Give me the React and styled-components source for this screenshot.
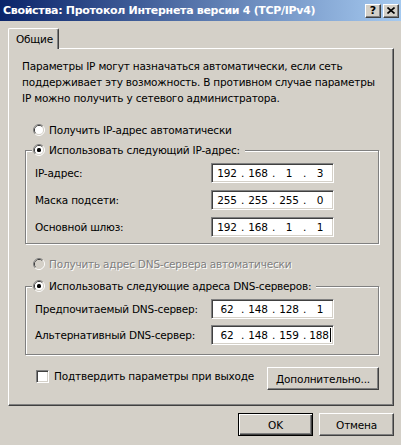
import React from "react";
import styled, { createGlobalStyle } from "styled-components";

const Global = createGlobalStyle`
  html, body { margin: 0; padding: 0; background: #d4d0c8; }
  * { box-sizing: border-box; }
`;

const Win = styled.div`
  width: 401px;
  height: 445px;
  background: #d4d0c8;
  display: flex;
  flex-direction: column;
  font-family: Tahoma, "DejaVu Sans", sans-serif;
  font-size: 10.5px;
  letter-spacing: -0.2px;
  color: #000;
  overflow: hidden;
`;

const TitleBar = styled.div`
  height: 21px;
  flex: none;
  display: flex;
  align-items: center;
  justify-content: space-between;
  padding: 0 2px 0 3px;
  background: linear-gradient(to right, #0a246a, #a6caf0);
`;

const Title = styled.span`
  color: #fff;
  font-weight: bold;
  font-size: 11px;
  letter-spacing: -0.3px;
  white-space: nowrap;
`;

const CaptionButtons = styled.div`
  display: flex;
  gap: 2px;
`;

const CaptionButton = styled.div`
  width: 16px;
  height: 14px;
  background: #d4d0c8;
  border: 1px solid;
  border-color: #fff #404040 #404040 #fff;
  box-shadow: inset -1px -1px #808080;
  display: flex;
  align-items: center;
  justify-content: center;
  font-weight: bold;
  font-size: 11px;
  letter-spacing: 0;
  line-height: 1;
`;

const Body = styled.div`
  flex: 1;
  display: flex;
  flex-direction: column;
  padding: 7px 7px 0 8px;
`;

const TabStrip = styled.div`
  display: flex;
  height: 20px;
`;

const Tab = styled.div`
  position: relative;
  z-index: 1;
  width: 51px;
  height: 21px;
  margin-bottom: -1px;
  background: #d4d0c8;
  border-top: 1px solid #fff;
  border-left: 1px solid #fff;
  border-right: 1px solid #404040;
  border-radius: 2px 2px 0 0;
  box-shadow: inset -1px 0 #808080;
  padding: 2px 0 0 7px;
  line-height: 16px;
`;

const TabPanel = styled.div`
  display: flex;
  flex-direction: column;
  border: 1px solid;
  border-color: #fff #404040 #404040 #fff;
  box-shadow: inset -1px -1px #808080;
  padding: 0 14px 15px 13px;
`;

const Description = styled.p`
  margin: 9px 0 0;
  line-height: 16px;
  white-space: nowrap;
`;

const OptionRow = styled.label`
  display: flex;
  align-items: center;
  gap: 4px;
  height: 16px;
  margin: ${(p) => p.$mt || 0}px 0 0 11px;
  color: ${(p) => (p.$disabled ? "#808080" : "#000")};
  text-shadow: ${(p) => (p.$disabled ? "1px 1px 0 #fff" : "none")};
  white-space: nowrap;
`;

const Group = styled.fieldset`
  margin: ${(p) => p.$mt}px 0 0 3px;
  padding: ${(p) => p.$pt}px 44px ${(p) => p.$pb}px 9px;
  border: 1px solid #808080;
  box-shadow: inset 1px 1px 0 #fff, 1px 1px 0 #fff;
  display: grid;
  grid-template-columns: 1fr 123px;
  row-gap: ${(p) => p.$gap}px;
  align-items: center;
  min-width: 0;
`;

const Legend = styled.legend`
  margin-left: -3px;
  padding: 0 5px 0 1px;
  background: #d4d0c8;
  height: 14px;
  display: flex;
  align-items: center;
  gap: 4px;
  white-space: nowrap;
`;

const FieldLabel = styled.span`
  white-space: nowrap;
`;

const IpBox = styled.div`
  height: 20px;
  background: #fff;
  border: 1px solid;
  border-color: #808080 #fff #fff #808080;
  box-shadow: inset 1px 1px #404040, inset -1px -1px #d4d0c8;
  display: flex;
  align-items: center;
  padding-left: 3px;
`;

const Segment = styled.span`
  width: 24px;
  display: inline-flex;
  justify-content: center;
  align-items: center;
`;

const Dot = styled.span`
  width: 7px;
  text-align: center;
`;

const Caret = styled.span`
  display: inline-block;
  width: 1px;
  height: 14px;
  background: #000;
  margin-left: 1px;
`;

const BottomRow = styled.div`
  display: flex;
  align-items: center;
  justify-content: space-between;
  margin-top: 12px;
  height: 23px;
`;

const CheckLabel = styled.label`
  display: flex;
  align-items: center;
  gap: 5px;
  margin-left: 14px;
  margin-top: -5px;
  white-space: nowrap;
`;

const CheckBox = styled.span`
  width: 13px;
  height: 13px;
  flex: none;
  background: #fff;
  border: 1px solid;
  border-color: #808080 #fff #fff #808080;
  box-shadow: inset 1px 1px #404040, inset -1px -1px #d4d0c8;
`;

const Button = styled.button`
  font: inherit;
  letter-spacing: inherit;
  color: #000;
  height: 23px;
  width: ${(p) => p.$w}px;
  flex: none;
  background: #d4d0c8;
  padding: 0;
  border: 1px solid;
  border-color: ${(p) => (p.$default ? "#000" : "#fff #404040 #404040 #fff")};
  box-shadow: ${(p) =>
    p.$default
      ? "inset 1px 1px #fff, inset -1px -1px #404040, inset -2px -2px #808080"
      : "inset -1px -1px #808080"};
`;

const Footer = styled.div`
  display: flex;
  justify-content: flex-end;
  gap: 6px;
  margin-top: 7px;
`;

const Radio = ({ checked, disabled }) => (
  <svg width="12" height="12" viewBox="0 0 12 12" style={{ flex: "none" }}>
    <path d="M2.11 9.89 A5.5 5.5 0 0 1 9.89 2.11" fill="none" stroke="#808080" />
    <path d="M9.89 2.11 A5.5 5.5 0 0 1 2.11 9.89" fill="none" stroke="#fff" />
    <path d="M2.82 9.18 A4.5 4.5 0 0 1 9.18 2.82" fill="none" stroke="#404040" />
    <path d="M9.18 2.82 A4.5 4.5 0 0 1 2.82 9.18" fill="none" stroke="#d4d0c8" />
    <circle cx="6" cy="6" r="4" fill={disabled ? "#d4d0c8" : "#fff"} />
    {checked && <rect x="4" y="4" width="4" height="4" rx="1.6" fill="#000" />}
  </svg>
);

const CloseGlyph = () => (
  <svg width="8" height="7" viewBox="0 0 8 7">
    <path d="M0.5 0.5 L7.5 6.5 M7.5 0.5 L0.5 6.5" stroke="#000" strokeWidth="1.6" />
  </svg>
);

const IpField = ({ parts, caret }) => (
  <IpBox>
    {parts.map((p, i) => (
      <React.Fragment key={i}>
        {i > 0 && <Dot>.</Dot>}
        <Segment>
          {p}
          {caret && i === parts.length - 1 && <Caret />}
        </Segment>
      </React.Fragment>
    ))}
  </IpBox>
);

export default function App() {
  return (
    <Win>
      <Global />
      <TitleBar>
        <Title>Свойства: Протокол Интернета версии 4 (TCP/IPv4)</Title>
        <CaptionButtons>
          <CaptionButton>?</CaptionButton>
          <CaptionButton>
            <CloseGlyph />
          </CaptionButton>
        </CaptionButtons>
      </TitleBar>
      <Body>
        <TabStrip>
          <Tab>Общие</Tab>
        </TabStrip>
        <TabPanel>
          <Description>
            Параметры IP могут назначаться автоматически, если сеть
            <br />
            поддерживает эту возможность. В противном случае параметры
            <br />
            IP можно получить у сетевого администратора.
          </Description>

          <OptionRow $mt={16}>
            <Radio />
            Получить IP-адрес автоматически
          </OptionRow>

          <Group $mt={5} $pt={6} $pb={6} $gap={7}>
            <Legend>
              <Radio checked />
              Использовать следующий IP-адрес:
            </Legend>
            <FieldLabel>IP-адрес:</FieldLabel>
            <IpField parts={["192", "168", "1", "3"]} />
            <FieldLabel>Маска подсети:</FieldLabel>
            <IpField parts={["255", "255", "255", "0"]} />
            <FieldLabel>Основной шлюз:</FieldLabel>
            <IpField parts={["192", "168", "1", "1"]} />
          </Group>

          <OptionRow $mt={12} $disabled>
            <Radio disabled />
            Получить адрес DNS-сервера автоматически
          </OptionRow>

          <Group $mt={7} $pt={6} $pb={9} $gap={6}>
            <Legend>
              <Radio checked />
              Использовать следующие адреса DNS-серверов:
            </Legend>
            <FieldLabel>Предпочитаемый DNS-сервер:</FieldLabel>
            <IpField parts={["62", "148", "128", "1"]} />
            <FieldLabel>Альтернативный DNS-сервер:</FieldLabel>
            <IpField parts={["62", "148", "159", "188"]} caret />
          </Group>

          <BottomRow>
            <CheckLabel>
              <CheckBox />
              Подтвердить параметры при выходе
            </CheckLabel>
            <Button $w={112}>Дополнительно...</Button>
          </BottomRow>
        </TabPanel>
        <Footer>
          <Button $w={75} $default>
            OK
          </Button>
          <Button $w={75}>Отмена</Button>
        </Footer>
      </Body>
    </Win>
  );
}
